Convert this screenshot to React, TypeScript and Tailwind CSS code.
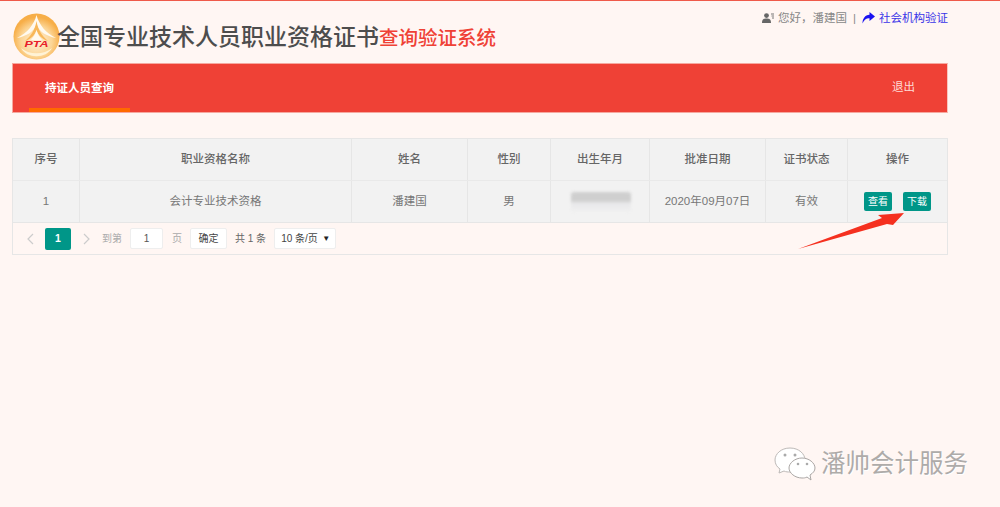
const columns = ['序号', '职业资格名称', '姓名', '性别', '出生年月', '批准日期', '证书状态', '操作'];
const gridCols = 'grid grid-cols-[67px_272px_116px_83px_99px_116px_82px_1fr]';
const cell = 'flex items-center justify-center border-r border-[#e6e6e6] last:border-r-0';

function Logo() {
  return (
    <svg width="47" height="47" viewBox="0 0 47 47" className="shrink-0">
      <defs>
        <radialGradient id="pta" cx="50%" cy="60%" r="52%">
          <stop offset="0%" stopColor="#fff0d8" />
          <stop offset="65%" stopColor="#fcd595" />
          <stop offset="100%" stopColor="#f7ae48" />
        </radialGradient>
      </defs>
      <circle cx="23.5" cy="23.5" r="23" fill="url(#pta)" />
      <path d="M23.5 2 C21 12 14 20 4 25 C14 23 20 19 23.5 12 C27 19 33 23 43 25 C33 20 26 12 23.5 2Z" fill="#fffaf0" />
      <path d="M23.5 8 C22 17 18 23 12 28 C18 26 22 22 23.5 17 C25 22 29 26 35 28 C29 23 25 17 23.5 8Z" fill="#f8b85a" />
      <path d="M23.5 17 C22.5 21 20.5 24 18 27 L29 27 C26.5 24 24.5 21 23.5 17Z" fill="#fffaf0" />
      <path d="M8 35 C16 42 31 42 39 35 C33 46 14 46 8 35Z" fill="#fff3d6" />
      <text x="23.5" y="33.5" textAnchor="middle" fontSize="9" fontWeight="700" fontStyle="italic" textLength="24" lengthAdjust="spacingAndGlyphs" fill="#e8202a" fontFamily="Liberation Sans, sans-serif">PTA</text>
    </svg>
  );
}

function Arrow() {
  return (
    <svg width="120" height="50" viewBox="0 0 120 50" className="absolute left-[790px] top-[205px]">
      <path d="M8 43 L92 12 L88 9 L114 7 L103 19 L97 18 Z" fill="#f5301f" />
    </svg>
  );
}

function WeChatMark() {
  return (
    <svg width="42" height="36" viewBox="0 0 42 36">
      <path d="M16 2 C7 2 1 8 1 14 C1 18 3 21 6 23 L5 27 L10 25 C12 26 14 26 16 26 C25 26 31 20 31 14 C31 8 25 2 16 2Z" fill="#ffffff" stroke="#bdb9b7" />
      <path d="M28 12 C21 12 15 17 15 22 C15 27 21 32 28 32 C30 32 31 32 33 31 L37 34 L36 29 C39 27 41 25 41 22 C41 17 35 12 28 12Z" fill="#ffffff" stroke="#aaa6a4" />
      <circle cx="11" cy="9" r="1.5" fill="#aaa" />
      <circle cx="21" cy="9" r="1.5" fill="#aaa" />
      <circle cx="24" cy="18" r="1.3" fill="#aaa" />
      <circle cx="33" cy="18" r="1.3" fill="#aaa" />
    </svg>
  );
}

export default function App() {
  return (
    <div className="relative h-[507px] w-[1000px] overflow-hidden border-t border-[#ef5a4a] bg-[#fff6f3] font-['Liberation_Sans','Noto_Sans_CJK_SC',sans-serif] text-[#666]">
      <header className="flex h-[62px] items-start pl-[13px] pr-[52px]">
        <div className="mt-[12px]">
          <Logo />
        </div>
        <h1 className="ml-[-3px] mt-[20px] whitespace-nowrap text-[23px] leading-[32px] font-medium text-[#4d4d4d]">
          全国专业技术人员职业资格证书
          <span className="text-[19.5px] text-[#ef4136]">查询验证系统</span>
        </h1>
        <div className="ml-auto mt-[9px] flex items-center text-[11.5px] leading-[16px] text-[#888]">
          <svg width="12" height="10" viewBox="0 0 12 10" className="mr-[4px]">
            <circle cx="4.5" cy="2.6" r="2.4" fill="#666" />
            <path d="M0 10 C0 6 2 5.5 4.5 5.5 C7 5.5 9 6 9 10Z" fill="#666" />
            <path d="M9 1h3M9.5 3h2.5M10 5h2" stroke="#777" />
          </svg>
          <span>您好，潘建国</span>
          <span className="mx-[6px]">|</span>
          <svg width="13" height="12" viewBox="0 0 13 12" className="mr-[4px]">
            <path d="M7.5 0 L13 4.5 L7.5 9 V6.2 C4.5 6 2 7.5 0.5 11.5 C0.5 6.5 3 3 7.5 2.7Z" fill="#1a12f0" />
          </svg>
          <span className="text-[#3a35e8]">社会机构验证</span>
        </div>
      </header>

      <nav className="mx-[12px] flex h-[50px] w-[936px] items-stretch justify-between border border-[#f6a89f] border-r-[#f8c5bd] bg-[#ef4136] text-[11.5px] text-white">
        <a className="ml-[16px] flex w-[101px] items-center justify-center border-b-[4px] border-[#ff6a00] pt-[5px] font-bold">
          持证人员查询
        </a>
        <a className="flex items-center pr-[32px] text-[#ffdcd6]">退出</a>
      </nav>

      <section className="ml-[12px] mt-[25px] w-[936px] border border-[#e6e6e6] text-[11.5px]">
        <div className={`${gridCols} h-[42px] border-b border-[#e9e9e9] bg-[#f2f2f2] font-medium text-[#666]`}>
          {columns.map((c) => (
            <div key={c} className={cell}>{c}</div>
          ))}
        </div>
        <div className={`${gridCols} h-[42px] border-b border-[#e6e6e6] bg-[#f2f2f2] text-[#777]`}>
          <div className={cell}>1</div>
          <div className={cell}>会计专业技术资格</div>
          <div className={cell}>潘建国</div>
          <div className={cell}>男</div>
          <div className={cell}>
            <div className="ml-[2px] mt-[1px] h-[20px] w-[60px] rounded-[3px] bg-[linear-gradient(#cfcfcf_0%,#cfcfcf_45%,#e8e8ea_55%,#f0f0f0_100%)] blur-[1.5px]" />
          </div>
          <div className={cell}>2020年09月07日</div>
          <div className={cell}>有效</div>
          <div className={`${cell} gap-[11px]`}>
            <button className="h-[19px] w-[28px] rounded-[2px] bg-[#009688] text-[10px] text-white">查看</button>
            <button className="h-[19px] w-[28px] rounded-[2px] bg-[#009688] text-[10px] text-white">下载</button>
          </div>
        </div>
        <div className="flex h-[31px] items-center pl-[13px] text-[10px] text-[#999]">
          <span className="flex w-[19px] text-[#ccc]">
            <svg width="8" height="12" viewBox="0 0 8 12" fill="none" stroke="currentColor" strokeWidth="1.2"><path d="M7 1 L2 6 L7 11" /></svg>
          </span>
          <span className="flex h-[22px] w-[26px] items-center justify-center rounded-[2px] bg-[#009688] text-[10.5px] font-bold text-white">1</span>
          <span className="ml-[12px] flex w-[19px] text-[#ccc]">
            <svg width="8" height="12" viewBox="0 0 8 12" fill="none" stroke="currentColor" strokeWidth="1.2"><path d="M1 1 L6 6 L1 11" /></svg>
          </span>
          <span className="text-[#aaa]">到第</span>
          <span className="ml-[8px] flex h-[21px] w-[33px] items-center justify-center rounded-[2px] border border-[#eee] bg-white text-[#555]">1</span>
          <span className="ml-[9px] text-[#aaa]">页</span>
          <span className="ml-[8px] flex h-[21px] w-[37px] items-center justify-center rounded-[2px] border border-[#eee] bg-white text-[#444]">确定</span>
          <span className="ml-[8px] text-[#666]">共 1 条</span>
          <span className="ml-[8px] flex h-[21px] w-[62px] items-center justify-between rounded-[2px] border border-[#eee] bg-white pl-[6px] pr-[5px] text-[#444]">
            10 条/页
            <span className="text-[8px] text-[#222]">▼</span>
          </span>
        </div>
      </section>

      <Arrow />

      <div className="absolute left-[774px] top-[445px] flex items-center gap-[5px]">
        <WeChatMark />
        <span className="text-[24.5px] leading-[36px] text-[#aeaba9] [text-shadow:1px_1px_0_#fff]">潘帅会计服务</span>
      </div>
    </div>
  );
}
